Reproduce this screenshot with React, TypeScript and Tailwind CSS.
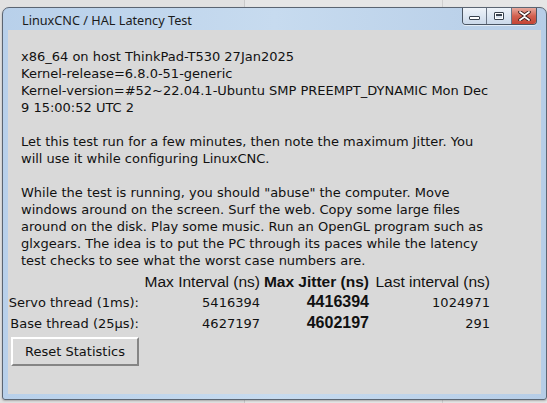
// LinuxCNC latency test window, Tk look inside a Win7-style frame.

const LINES = [
  'x86_64 on host ThinkPad-T530 27Jan2025',
  'Kernel-release=6.8.0-51-generic',
  'Kernel-version=#52~22.04.1-Ubuntu SMP PREEMPT_DYNAMIC Mon Dec',
  '9 15:00:52 UTC 2',
  '',
  'Let this test run for a few minutes, then note the maximum Jitter. You',
  'will use it while configuring LinuxCNC.',
  '',
  'While the test is running, you should "abuse" the computer. Move',
  'windows around on the screen. Surf the web. Copy some large files',
  'around on the disk. Play some music. Run an OpenGL program such as',
  'glxgears. The idea is to put the PC through its paces while the latency',
  'test checks to see what the worst case numbers are.',
];

const ROWS = [
  { label: 'Servo thread (1ms):', max: '5416394', jitter: '4416394', last: '1024971' },
  { label: 'Base thread (25µs):', max: '4627197', jitter: '4602197', last: '291' },
];

function CaptionButtons() {
  return (
    <div className="mr-[9px] flex h-[17px] overflow-hidden rounded-b-[4px] border border-t-0 border-[#4a5563] shadow-[0_1px_0_rgba(255,255,255,0.6)]">
      {/* minimize */}
      <div className="flex w-[24px] items-end justify-center border-r border-[#6a7585] bg-linear-to-b from-[#eef3f9] to-[#cbd9ea] pb-[4px]">
        <div className="h-[4px] w-[11px] rounded-[1px] border border-[#39424e] bg-white" />
      </div>
      {/* maximize */}
      <div className="flex w-[25px] items-center justify-center border-r border-[#6a7585] bg-linear-to-b from-[#eef3f9] to-[#cbd9ea]">
        <div className="h-[8px] w-[10px] rounded-[1px] border border-[#39424e] bg-white p-[1px]">
          <div className="h-full w-full border-t-[2px] border-[#39424e] bg-[#d8e2ee]" />
        </div>
      </div>
      {/* close */}
      <div className="flex w-[24px] items-center justify-center bg-linear-to-b from-[#e6a99e] via-[#d2604f] to-[#c44434]">
        <svg width="13" height="10" viewBox="0 0 13 10">
          <path
            d="M2 1 L6.5 4.2 L11 1 M2 9 L6.5 5.8 L11 9"
            stroke="#3a2020"
            strokeWidth="3.6"
            strokeLinecap="round"
            fill="none"
          />
          <path
            d="M2 1 L6.5 4.2 L11 1 M2 9 L6.5 5.8 L11 9"
            stroke="#ffffff"
            strokeWidth="1.8"
            strokeLinecap="round"
            fill="none"
          />
        </svg>
      </div>
    </div>
  );
}

export default function App() {
  return (
    <div className="relative h-[403px] w-[547px] overflow-hidden bg-[#e6e6e6]">
      {/* desktop behind the window */}
      <div className="absolute left-0 top-0 h-full w-[244px] bg-[#e1e1e1]" />
      <div className="absolute left-[244px] top-0 h-full w-px bg-[#c9c9c9]" />
      <div className="absolute left-[442px] top-0 h-full w-px bg-[#cfcfcf]" />

      <div className="relative ml-[2px] mt-[7px] flex h-[393px] w-[545px] flex-col rounded-t-[7px] rounded-b-[3px] border border-[#5b6572] bg-linear-to-r from-[#b8d0ea] via-[#c7dbef] to-[#b6cde7] shadow-[0_1px_2px_rgba(0,0,0,0.25)]">
        {/* title bar */}
        <div className="flex h-[22px] items-start justify-between">
          <span className="pl-[19px] pt-[4px] font-['Noto_Sans',sans-serif] text-[12.7px] leading-[16px] text-[#1b1b1b]">
            LinuxCNC / HAL Latency Test
          </span>
          <CaptionButtons />
        </div>

        {/* client area */}
        <div className="mx-[5px] mb-[5px] flex flex-1 flex-col bg-[#d9d9d9] font-['DejaVu_Sans',sans-serif] text-[13px] text-[#111]">
          <div className="pl-[13px] pt-[18px] leading-[17px]">
            {LINES.map((line, i) => (
              <div key={i} className="h-[17px] whitespace-nowrap">
                {line}
              </div>
            ))}
          </div>

          <div className="mt-[3px] grid grid-cols-[131px_121px_109px_121px] text-right">
            <div />
            <div className="h-[20px] whitespace-nowrap font-['Liberation_Sans',sans-serif] text-[15.5px] leading-[20px]">
              Max Interval (ns)
            </div>
            <div className="h-[20px] whitespace-nowrap font-['Liberation_Sans',sans-serif] text-[15.5px] font-bold leading-[20px]">
              Max Jitter (ns)
            </div>
            <div className="h-[20px] whitespace-nowrap font-['Liberation_Sans',sans-serif] text-[15.5px] leading-[20px]">
              Last interval (ns)
            </div>
            {ROWS.map((r) => (
              <div key={r.label} className="contents">
                <div className="mt-px h-[20px] whitespace-nowrap leading-[20px]">{r.label}</div>
                <div className="mt-px h-[20px] leading-[20px]">{r.max}</div>
                <div className="mt-px h-[20px] font-['Liberation_Sans',sans-serif] text-[16px] font-bold leading-[18px]">
                  {r.jitter}
                </div>
                <div className="mt-px h-[20px] leading-[20px]">{r.last}</div>
              </div>
            ))}
          </div>

          <div className="ml-[3px] mt-[3px]">
            <button className="h-[29px] w-[128px] border-2 border-t-white border-l-white border-r-[#858585] border-b-[#858585] bg-[#d9d9d9] text-[13px] text-[#111]">
              Reset Statistics
            </button>
          </div>
        </div>
      </div>
    </div>
  );
}
